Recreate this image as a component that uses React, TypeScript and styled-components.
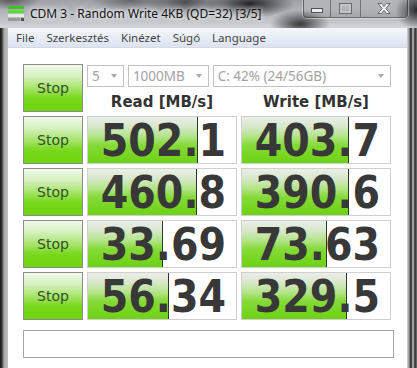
import { FC } from "react";
import styled, { createGlobalStyle } from "styled-components";

const GlobalStyle = createGlobalStyle`
  html, body {
    margin: 0;
    padding: 0;
    background: #2a2c2e;
  }
`;

interface ResultType {
  read: number;
  write: number;
}

const results: ResultType[] = [
  { read: 502.1, write: 403.7 },
  { read: 460.8, write: 390.6 },
  { read: 33.69, write: 73.63 },
  { read: 56.34, write: 329.5 },
];

// CDM draws the meter on a log scale
const meterWidth = (value: number) =>
  Math.round(28 + 30.5 * Math.log10(value));

const AppIcon: FC = () => (
  <svg width="18" height="16" viewBox="0 0 18 16">
    <rect x="0" y="0" width="16" height="3" fill="#3fbf2a" />
    <rect x="0" y="4" width="16" height="3" fill="#5fd83a" />
    <rect x="0" y="8" width="16" height="3" fill="#e8e8e8" />
    <rect x="0" y="12" width="12" height="3" fill="#9a9a9a" />
    <rect x="13" y="12" width="3" height="3" fill="#505050" />
  </svg>
);

const CloseIcon: FC = () => (
  <svg width="14" height="11" viewBox="0 0 14 11">
    <path
      d="M1 0.5h3.5L7 3.6 9.5 0.5H13L8.8 5.5 13 10.5H9.5L7 7.4 4.5 10.5H1l4.2-5z"
      fill="#f4f4f4"
      stroke="#4a4a4a"
      strokeWidth="0.8"
    />
  </svg>
);

const ResultCell: FC<{ value: number }> = ({ value }) => (
  <Cell>
    <Meter style={{ width: meterWidth(value) }} />
    <Score>{value}</Score>
  </Cell>
);

const App: FC = () => {
  return (
    <>
      <GlobalStyle />
      <Window>
        <TitleBar>
          <IconSlot>
            <AppIcon />
          </IconSlot>
          <Title>CDM 3 - Random Write 4KB (QD=32) [3/5]</Title>
          <Caption>
            <CaptionButton $width={26}>
              <MinGlyph />
            </CaptionButton>
            <CaptionButton $width={29}>
              <MaxGlyph />
            </CaptionButton>
            <CaptionButton $width={46} $last>
              <CloseIcon />
            </CaptionButton>
          </Caption>
        </TitleBar>
        <Body>
          <Client>
            <MenuBar>
              <MenuItem>File</MenuItem>
              <MenuItem>Szerkesztés</MenuItem>
              <MenuItem>Kinézet</MenuItem>
              <MenuItem>Súgó</MenuItem>
              <MenuItem>Language</MenuItem>
            </MenuBar>
            <Content>
              <Grid>
                <StopButton>Stop</StopButton>
                <Header>
                  <ComboRow>
                    <Combo $width={37}>5</Combo>
                    <Combo $width={81}>1000MB</Combo>
                    <Combo $width={179}>C: 42% (24/56GB)</Combo>
                  </ComboRow>
                  <Labels>
                    <Label>Read [MB/s]</Label>
                    <Label>Write [MB/s]</Label>
                  </Labels>
                </Header>
                {results.map((r, i) => (
                  <Row key={i}>
                    <StopButton>Stop</StopButton>
                    <ResultCell value={r.read} />
                    <ResultCell value={r.write} />
                  </Row>
                ))}
              </Grid>
              <Comment />
            </Content>
          </Client>
        </Body>
      </Window>
    </>
  );
};

const Window = styled.div`
  display: flex;
  flex-direction: column;
  width: 417px;
  height: 368px;
  overflow: hidden;
  background:
    radial-gradient(ellipse 45px 14px at 250px 4px, rgba(10, 10, 12, 0.85), transparent),
    radial-gradient(ellipse 40px 16px at 185px 2px, rgba(20, 20, 22, 0.6), transparent),
    radial-gradient(ellipse 30px 14px at 300px 24px, rgba(20, 20, 22, 0.8), transparent),
    radial-gradient(ellipse 22px 20px at 417px 10px, rgba(15, 15, 15, 0.85), transparent),
    radial-gradient(ellipse 40px 12px at 130px 0px, rgba(40, 40, 42, 0.5), transparent),
    radial-gradient(ellipse 30px 10px at 10px 0px, rgba(40, 40, 42, 0.6), transparent),
    linear-gradient(180deg, #9ea2a6 0px, #c3c7cb 22px, #d4d7da 28px, #8f9397 60px);
`;

const TitleBar = styled.div`
  display: flex;
  align-items: flex-start;
  height: 28px;
  flex: 0 0 28px;
  padding-left: 8px;
  padding-right: 9px;
`;

const IconSlot = styled.div`
  display: flex;
  padding-top: 6px;
`;

const Title = styled.div`
  flex: 1;
  padding: 6px 0 0 4px;
  font-family: "Noto Sans", "DejaVu Sans", sans-serif;
  font-size: 12px;
  line-height: 16px;
  color: #101010;
  text-shadow: 0 0 7px rgba(255, 255, 255, 0.95), 0 0 4px rgba(255, 255, 255, 0.9);
  white-space: nowrap;
`;

const Caption = styled.div`
  display: flex;
  height: 17px;
  border: 1px solid rgba(50, 50, 50, 0.6);
  border-top: none;
  border-radius: 0 0 4px 4px;
  box-shadow: 0 0 0 1px rgba(255, 255, 255, 0.35);
  overflow: hidden;
`;

const CaptionButton = styled.div<{ $width: number; $last?: boolean }>`
  display: flex;
  align-items: center;
  justify-content: center;
  width: ${(p) => p.$width}px;
  border-right: ${(p) => (p.$last ? "none" : "1px solid rgba(50, 50, 50, 0.5)")};
  background: linear-gradient(180deg, rgba(255, 255, 255, 0.22), rgba(255, 255, 255, 0.05) 50%, rgba(0, 0, 0, 0.12));
`;

const MinGlyph = styled.div`
  width: 10px;
  height: 3px;
  margin-top: 4px;
  background: #ececec;
  border: 1px solid #505050;
`;

const MaxGlyph = styled.div`
  width: 7px;
  height: 5px;
  border: 2px solid #c4c4c4;
  outline: 1px solid #6a6a6a;
`;

const Body = styled.div`
  flex: 1;
  display: flex;
  padding: 0 10px 0 8px;
  background: linear-gradient(
    90deg,
    #151515 0px,
    #3a3a3a 2px,
    #a6a6a6 4px,
    #c2c2c2 8px,
    transparent 8px,
    transparent 407px,
    #d6d6d6 407px,
    #9a9a9a 409px,
    #1c1c1c 411px,
    #c8c8c8 413px,
    #2a2a2a 415px,
    #777 417px
  );
`;

const Client = styled.div`
  flex: 1;
  display: flex;
  flex-direction: column;
  background: #ffffff;
`;

const MenuBar = styled.div`
  display: flex;
  align-items: center;
  gap: 12px;
  height: 19px;
  padding-left: 8px;
  background: linear-gradient(180deg, #f4f6fb, #e6ebf5 60%, #dde3ef);
  border-bottom: 1px solid #d4d9e3;
`;

const MenuItem = styled.span`
  font-family: "Noto Sans", "DejaVu Sans", sans-serif;
  font-size: 11.5px;
  color: #444444;
`;

const Content = styled.div`
  display: flex;
  flex-direction: column;
  gap: 10px;
  padding: 16px 0 0 15px;
`;

const Grid = styled.div`
  display: grid;
  grid-template-columns: 60px 150px 150px;
  grid-auto-rows: 48px;
  column-gap: 4px;
  row-gap: 4px;
`;

const Row = styled.div`
  display: contents;
`;

const StopButton = styled.div`
  display: flex;
  align-items: center;
  justify-content: center;
  box-sizing: border-box;
  border: 1px solid #8c8c8c;
  background: linear-gradient(
    180deg,
    #f2faeb 0%,
    #d5f0bd 25%,
    #a8e46c 50%,
    #78d81c 72%,
    #6fd40c 100%
  );
  font-family: "DejaVu Sans", sans-serif;
  font-size: 14px;
  color: #33502a;
`;

const Header = styled.div`
  grid-column: 2 / 4;
  display: flex;
  flex-direction: column;
  padding-top: 1px;
`;

const ComboRow = styled.div`
  display: flex;
  gap: 4px;
`;

const Combo = styled.div<{ $width: number }>`
  position: relative;
  box-sizing: border-box;
  width: ${(p) => p.$width}px;
  height: 22px;
  padding-left: 4px;
  border: 1px solid #c2c2c2;
  background: #ffffff;
  font-family: "Noto Sans", "DejaVu Sans", sans-serif;
  font-size: 13.5px;
  line-height: 20px;
  color: #a3a3a3;
  white-space: nowrap;

  &::after {
    content: "";
    position: absolute;
    right: 6px;
    top: 8px;
    border-left: 3px solid transparent;
    border-right: 3px solid transparent;
    border-top: 4px solid #a8a8a8;
  }
`;

const Labels = styled.div`
  display: grid;
  grid-template-columns: 150px 150px;
  column-gap: 4px;
  margin-top: 6px;
`;

const Label = styled.div`
  text-align: center;
  font-family: "DejaVu Sans", sans-serif;
  font-weight: bold;
  font-size: 15px;
  line-height: 18px;
  color: #333333;
`;

const Cell = styled.div`
  position: relative;
  box-sizing: border-box;
  border: 1px solid #cfcfcf;
  background: #ffffff;
`;

const Meter = styled.div`
  position: absolute;
  left: 0;
  top: 0;
  bottom: 0;
  box-sizing: border-box;
  border-right: 1px solid #2c3a2a;
  background: linear-gradient(
    180deg,
    #eceeea 0%,
    #d8e8cc 20%,
    #b4e48a 42%,
    #84da36 62%,
    #6ed214 100%
  );
`;

const Score = styled.div`
  position: relative;
  box-sizing: border-box;
  height: 100%;
  padding: 2px 10px 0 0;
  text-align: right;
  font-family: "DejaVu Sans Condensed", "DejaVu Sans", sans-serif;
  font-weight: bold;
  font-size: 44px;
  line-height: 44px;
  color: #383838;
`;

const Comment = styled.div`
  box-sizing: border-box;
  width: 371px;
  height: 28px;
  border: 1px solid #a6a6a6;
  background: #ffffff;
`;

export default App;
